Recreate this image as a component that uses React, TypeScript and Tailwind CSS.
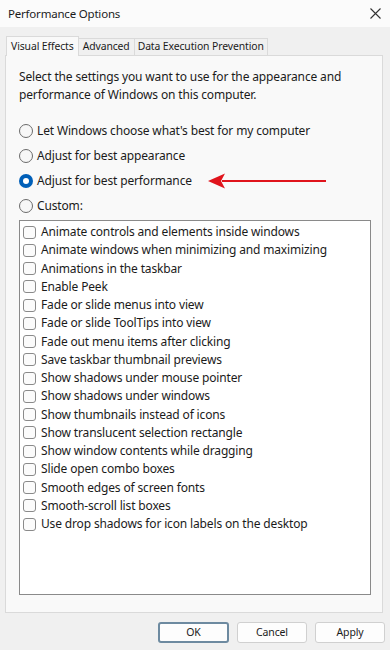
import React from "react";

const OPTIONS = [
  "Let Windows choose what's best for my computer",
  "Adjust for best appearance",
  "Adjust for best performance",
  "Custom:",
];

const EFFECTS = [
  "Animate controls and elements inside windows",
  "Animate windows when minimizing and maximizing",
  "Animations in the taskbar",
  "Enable Peek",
  "Fade or slide menus into view",
  "Fade or slide ToolTips into view",
  "Fade out menu items after clicking",
  "Save taskbar thumbnail previews",
  "Show shadows under mouse pointer",
  "Show shadows under windows",
  "Show thumbnails instead of icons",
  "Show translucent selection rectangle",
  "Show window contents while dragging",
  "Slide open combo boxes",
  "Smooth edges of screen fonts",
  "Smooth-scroll list boxes",
  "Use drop shadows for icon labels on the desktop",
];

const Radio = ({ checked }: { checked: boolean }) =>
  checked ? (
    <span className="flex h-[14px] w-[14px] shrink-0 items-center justify-center rounded-full bg-[#005fb8]">
      <span className="h-[6px] w-[6px] rounded-full bg-white" />
    </span>
  ) : (
    <span className="h-[14px] w-[14px] shrink-0 rounded-full border border-[#6b6b6b] bg-[#f7f7f7]" />
  );

const Arrow = () => (
  <svg width="120" height="18" viewBox="0 0 120 18" className="ml-[12px] shrink-0">
    <path d="M14 8 L118 8 L118 10 L14 10 Z" fill="#e0141c" />
    <path d="M0 9 L17 1.5 L13 9 L17 16.5 Z" fill="#e0141c" />
  </svg>
);

export default function App() {
  return (
    <div
      className="flex h-[650px] w-[390px] flex-col overflow-hidden bg-[#f0f0f0] text-[12px] tracking-[-0.15px] text-[#1b1b1b]"
      style={{ fontFamily: '"Noto Sans", "Open Sans", sans-serif' }}
    >
      <div className="flex h-[27px] items-center justify-between bg-[#fbfbfb] pl-[8px] pr-[9px]">
        <span className="text-[11.5px] tracking-[-0.2px]">Performance Options</span>
        <svg width="11" height="11" viewBox="0 0 11 11">
          <path d="M0.5 0.5 L10.5 10.5 M10.5 0.5 L0.5 10.5" stroke="#333" strokeWidth="1.1" />
        </svg>
      </div>

      <div className="flex h-[28px] items-end pl-[6px] text-[10.4px] tracking-[-0.1px]">
        <div className="z-10 -mb-px flex h-[20px] items-center border border-b-0 border-[#dadada] bg-[#f9f9f9] px-[4px]">
          Visual Effects
        </div>
        <div className="flex h-[17px] items-center border-t border-r border-[#dadada] px-[4px]">
          Advanced
        </div>
        <div className="flex h-[17px] items-center border-t border-r border-[#dadada] px-[3px]">
          Data Execution Prevention
        </div>
      </div>

      <div className="ml-[5px] mr-[7px] flex h-[558px] flex-col border border-[#dadada] bg-[#f9f9f9] pl-[13px] pr-[11px]">
        <p className="mt-[12px] leading-[18px]">
          Select the settings you want to use for the appearance and performance of Windows on this computer.
        </p>

        <div className="mt-[14px] flex flex-col">
          {OPTIONS.map((label, i) => (
            <div key={label} className="flex h-[25px] items-center gap-[4px]">
              <Radio checked={i === 2} />
              <span className="leading-none">{label}</span>
              {i === 2 ? <Arrow /> : null}
            </div>
          ))}
        </div>

        <div className="mt-[2px] h-[375px] border border-[#8a8a8a] bg-white pl-[3px] pt-[2px]">
          {EFFECTS.map((label) => (
            <div key={label} className="flex h-[18.25px] items-center gap-[5px]">
              <span className="h-[13px] w-[13px] shrink-0 rounded-[3px] border border-[#8a8a8a] bg-[#fbfbfb]" />
              <span className="leading-none">{label}</span>
            </div>
          ))}
        </div>
      </div>

      <div className="mt-[9px] flex gap-[8px] pl-[158px] text-[10.5px]">
        <button className="flex h-[21px] w-[71px] items-center justify-center rounded-[3px] border-2 border-[#6d8aa0] bg-[#fdfdfd]">
          OK
        </button>
        <button className="flex h-[21px] w-[70px] items-center justify-center rounded-[3px] border border-[#d0d0d0] bg-[#fdfdfd]">
          Cancel
        </button>
        <button className="flex h-[21px] w-[70px] items-center justify-center rounded-[3px] border border-[#d0d0d0] bg-[#fdfdfd]">
          Apply
        </button>
      </div>
    </div>
  );
}
